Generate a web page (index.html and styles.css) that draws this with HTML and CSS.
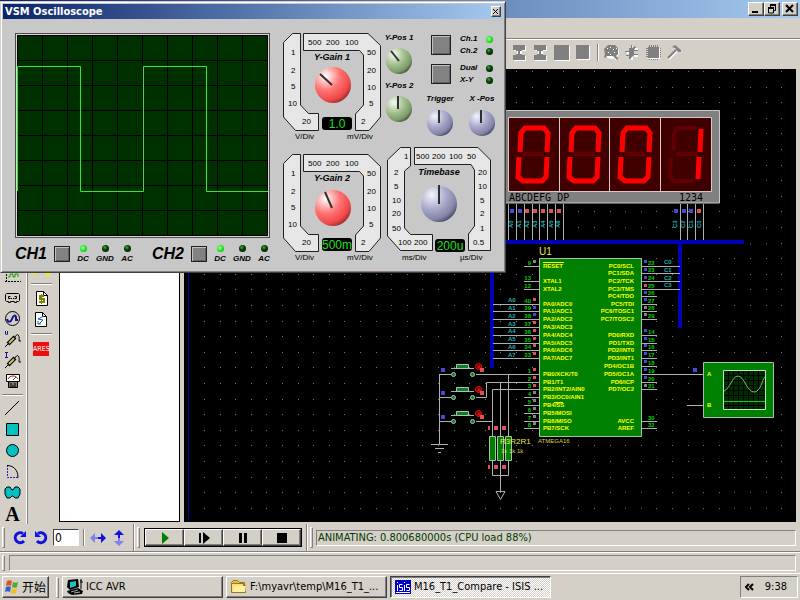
FILE: index.html
```html
<!DOCTYPE html>
<html lang="zh-CN">
<head>
<meta charset="utf-8">
<title>M16_T1_Compare - ISIS</title>
<link rel="stylesheet" href="styles.css">
</head>
<body>
<header class="titlebar">
  <button class="win-btn" aria-label="Minimize"><svg width="12" height="10"><path d="M2 8h6" stroke="#000" stroke-width="2"/></svg></button>
  <button class="win-btn" aria-label="Restore"><svg width="12" height="10" fill="none" stroke="#000"><path d="M4 1h6M4.500 1v3M9.500 1v5.500H8M2 4.500h6M2.500 4v5h5V4"/><path d="M4 1h6M2 4h6" stroke-width="2"/></svg></button>
  <button class="win-btn win-close" aria-label="Close"><svg width="12" height="10"><path d="M2 1l7 7M9 1L2 8" stroke="#000" stroke-width="2"/></svg></button>
</header>
<div class="menubar"></div>
<div class="toolbar">
  <button class="tool" aria-label="Block copy"><svg width="17" height="17"><path class="emb" d="M3 2h12v5h-4v5h4v5H3v-5h3V7H3z"/><path fill="#808080" d="M2 1h12v5h-3v1H9v3h2v1h3v5H2v-5h3v-1h2V7H5V6H2z"/></svg></button>
  <button class="tool" aria-label="Block move"><svg width="17" height="17"><path class="emb" d="M3 2h12v5h-4v5h4v5H3v-5h3V7H3z"/><path fill="#808080" d="M2 1h12v5h-3v1H9v3h2v1h3v5H2v-5h3v-1h2V7H5V6H2z"/></svg></button>
  <button class="tool" aria-label="Block rotate"><svg width="17" height="17"><path class="emb" d="M2 2h15v15H2z"/><path fill="#808080" d="M1 1h15v15H1z"/></svg></button>
  <button class="tool" aria-label="Block delete"><svg width="17" height="17"><path class="emb" d="M3 2h13v14H3z"/><path fill="#808080" d="M2 1h13v14H2z"/></svg></button>
  <span class="vsep"></span>
  <button class="tool" aria-label="Pick"><svg width="17" height="17"><g class="emb" transform="translate(1 1)"><circle cx="8" cy="7" r="7"/><path d="M11 10l5 5h-5z"/></g><path d="M5 1h7l3 3v6l-2 2 3 3-2 1-4-4H4l-2 2-1-1 1-3-1-5z" fill="#808080"/><path d="M4 4.500h1M7 3.500h1M10 5.500h1M5 8.500h1M11 8.500h1M7 10.500h1M13 4.500h1" stroke="#fff"/></svg></button>
  <button class="tool" aria-label="Make device"><svg width="17" height="17"><g stroke="#fff" stroke-width="2" transform="translate(1 1)"><path d="M7 1v14M2 8h4M9 4h4M9 11h4"/></g><path d="M7 1h1v3l3-2 1 1-2 3h4v1h-4v3h4v1h-4l-4 4H5v-3H2v-1h3V8H1V7h4V4h2z" fill="#808080"/></svg></button>
  <button class="tool" aria-label="Package"><svg width="17" height="17"><path d="M4.500 1v15M6.500 1v15M8.500 1v15M10.500 1v15M12.500 1v15M1 4.500h15M1 6.500h15M1 8.500h15M1 10.500h15M1 12.500h15" stroke="#808080"/><path class="emb" d="M4 4h11v11H4z"/><path d="M3 3h11v11H3z" fill="#808080"/></svg></button>
  <button class="tool" aria-label="Decompose"><svg width="17" height="17"><path d="M3 15L11 7M8 3l7 5" stroke="#fff" stroke-width="2"/><path d="M2 14L10 6" stroke="#808080" stroke-width="2"/><path d="M6 3l3-2 6 5v2h-2l-2-1-2-3z" fill="#808080"/></svg></button>
</div>

<main class="workspace">
  <nav class="modes">
    <button class="tool" aria-label="Graph"><svg width="17" height="17"><path d="M2.500 0v14M1 13.500h16" stroke="#000" stroke-dasharray="2 1"/><path d="M4 0h11v11H4z" fill="#c3e6b4"/><path d="M4 9h2V6h3v3h2V6h3v3M5 2l3-1 2 2 3-1" fill="none" stroke="#3c7a30"/></svg></button>
    <button class="tool" aria-label="Tape"><svg width="17" height="17" fill="none" stroke="#000"><path d="M2.500 4.500h12l1 1v6l-1 1h-2v1h-2v-1M2.500 4.500l-1 1v6l1 1h2v1h2v-1h4"/><path d="M6.500 7.500h-2v2h2M10.500 7.500h2v2h-2M7.500 9v1M9.500 9v1"/></svg></button>
    <button class="tool" aria-label="Generator"><svg width="17" height="17" fill="none"><circle cx="8.500" cy="8.500" r="7" stroke="#000"/><path d="M3 9c1 4 4 3 5 0s3-5 4-2v3h2" stroke="#14148c" stroke-width="2"/></svg></button>
    <button class="tool" aria-label="Voltage probe"><svg width="17" height="17" fill="none"><path d="M1.500 0v3l1 1 1-1V0" stroke="#14148c"/><path d="M4 13l7-7" stroke="#000" stroke-width="4"/><path d="M5 12l5-5" stroke="#c8c860" stroke-width="2"/><path d="M1 16l3-3M11 6c2-4 5-3 4 4h2" stroke="#000"/></svg></button>
    <button class="tool" aria-label="Current probe"><svg width="17" height="17" fill="none"><path d="M1 .5h3M2.500 0v5M1 5.500h3" stroke="#14148c"/><path d="M4 13l7-7" stroke="#000" stroke-width="4"/><path d="M5 12l5-5" stroke="#c8c860" stroke-width="2"/><path d="M1 16l3-3M11 6c2-4 5-3 4 4h2" stroke="#000"/></svg></button>
    <button class="tool" aria-label="Instruments"><svg width="17" height="17"><path d="M2.500 1.500h13v7h-13z" fill="#fff" stroke="#000"/><path d="M4 6c2-4 8-4 10 0M9 7l3-3" fill="none" stroke="#a02020"/><path d="M4.500 8.500h9v6h-9z" fill="#777" stroke="#000"/><path d="M6 11h2M10 11h2M6 13h6" stroke="#000"/></svg></button>
    <span class="hsep"></span>
    <button class="tool" aria-label="Line"><svg width="17" height="17"><path d="M1 15L15 1" stroke="#000" stroke-width="1"/></svg></button>
    <button class="tool" aria-label="Box"><svg width="17" height="17"><path d="M2.500 2.500h12v12h-12z" fill="#00c0c0" stroke="#000"/></svg></button>
    <button class="tool" aria-label="Circle"><svg width="17" height="17"><circle cx="8.500" cy="8.500" r="6" fill="#00c0c0" stroke="#000"/></svg></button>
    <button class="tool" aria-label="Arc"><svg width="17" height="17" fill="none"><path d="M3.500 2v12.500H15" stroke="#2020d0" stroke-dasharray="2 1"/><path d="M3 2.500c6 0 11 4 11 12" stroke="#000"/></svg></button>
    <button class="tool" aria-label="Closed path"><svg width="17" height="17"><path d="M3 3h3l2 3h1l2-3h3l2 2v5l-2 4h-3l-2-2H8l-2 2H3l-2-4V5z" fill="#00c0c0" stroke="#000"/></svg></button>
    <button class="tool glyph">A</button>
  </nav>
  <nav class="tasks">
    <button class="tool" aria-label="Netlist"><svg width="21" height="21"><path d="M3 11h6v3H5v2H2zM14 14h5v3h-4z" fill="#f4ee20"/></svg></button>
    <span class="hsep"></span>
    <button class="tool" aria-label="Bill of materials"><svg width="17" height="17"><path d="M3.500 1.500h7l4 4v10h-11z" fill="#fff" stroke="#000"/><path d="M10.500 1.500v4h4" fill="none" stroke="#000"/><path d="M11 6H7v3h4v3H6" fill="none" stroke="#808000" stroke-width="2"/><path d="M8.500 4v10" stroke="#808000"/></svg></button>
    <button class="tool" aria-label="Electrical check"><svg width="17" height="17"><path d="M2.500 1.500h7l4 4v10h-11z" fill="#fff" stroke="#000"/><path d="M9.500 1.500v4h4" fill="none" stroke="#000"/><path d="M11 5L5 8l5 1-4 4M5 10v3h3" fill="none" stroke="#1060b0"/></svg></button>
    <span class="hsep"></span>
    <button class="tool ares">ARES</button>
  </nav>
  <section class="picker"></section>
  <section class="canvas">
    <svg class="schematic" width="100%" height="100%">
      <defs>
        <pattern id="dots" width="78" height="78" patternUnits="userSpaceOnUse" x="516" y="71">
          <path stroke="#707870" stroke-dasharray="1 15 1 14 1 15 1 14 1 15" d="M0 .5H78M0 16.500H78M0 31.500H78M0 47.500H78M0 62.500H78"/>
        </pattern>
        <g id="switch">
          <path class="wire" d="M439 374.500h12M476 374.500h6M451 368.500h23"/>
          <path d="M456.500 364.500h12v4h-12z" fill="#107a30" stroke="#a8c8a8"/>
          <circle cx="453.500" cy="374.500" r="2" class="node"/><circle cx="472.500" cy="374.500" r="2" class="node"/>
          <circle cx="478.500" cy="366.500" r="3" fill="#600" stroke="#f01010"/><path d="M477 367h4M479 365v4" stroke="#f01010"/>
          <path class="lo" d="M441 368h4v4h-4z"/><path class="hi" d="M480 368h4v4h-4z"/>
        </g>
      </defs>
      <g transform="translate(-184 -69)">
        <path fill="url(#dots)" d="M184 69h1600v1200H184z"/>
        <path d="M188.500 69v1200" stroke="#000090"/>

        <!-- seven-segment display -->
        <path d="M490 110.500h229.500v92.500H490z" fill="#808080" stroke="#c8c8c8"/>
        <path d="M508.500 117.500H711.500V191.500H508.500z" fill="#400000" stroke="#d8c8c8"/>
        <path d="M559.500 117v74M609.500 117v74M660.500 117v74" stroke="#d8c8c8"/>
        <g class="seg-off"><path d="M523 154H544M574 154h21M625 154h21M676 154h21M673 151l1-18 4-5h18M671 158l-1 18 4 5h20"/></g>
        <g class="seg-on" id="zero"><path d="M520 152l1-19 4-5h19l4 5-1 19M519 157l-1 20 5 4h19l4-4 1-20"/></g>
        <use href="#zero" x="51"/><use href="#zero" x="102"/>
        <path class="seg-on" d="M701 129l-1 23M699 157l-1 22"/>
        <g class="port"><text x="509" y="201">ABCDEFG DP</text><text x="679" y="201">1234</text></g>
        <path class="wire" d="M508.500 204v37M516.500 204v37M524.500 204v37M532.500 204v37M539.500 204v37M547.500 204v37M555.500 204v37M563.500 204v37M680.500 204v37M687.500 204v37M695.500 204v37M703.500 204v37"/>
        <path class="lo" d="M510 209h4v4h-4zM518 209h4v4h-4zM674 209h4v4h-4zM682 209h4v4h-4zM689 209h4v4h-4z"/>
        <path class="hi" d="M525 209h4v4h-4zM533 209h4v4h-4zM541 209h4v4h-4zM549 209h4v4h-4zM557 209h4v4h-4zM697 209h4v4h-4z"/>
        <g class="net">
          <text transform="translate(513 228) rotate(-90)">A0</text><text transform="translate(521 228) rotate(-90)">A1</text><text transform="translate(529 228) rotate(-90)">A2</text><text transform="translate(537 228) rotate(-90)">A3</text><text transform="translate(545 228) rotate(-90)">A4</text><text transform="translate(553 228) rotate(-90)">A5</text><text transform="translate(560 228) rotate(-90)">A6</text>
          <text transform="translate(677 228) rotate(-90)">C3</text><text transform="translate(685 228) rotate(-90)">C2</text><text transform="translate(693 228) rotate(-90)">C1</text><text transform="translate(701 228) rotate(-90)">C0</text>
        </g>

        <!-- buses -->
        <path d="M490 242H744M680 242V328M492 242V368" stroke="#0000b4" stroke-width="4" fill="none"/>

        <!-- wires -->
        <path class="wire" d="M524 266.500h15M524 281.500h15M524 289.500h15M493 304.500h46M493 311.500h46M493 319.500h46M493 327.500h46M493 335.500h46M493 343.500h46M493 350.500h46M493 358.500h46M482 374.500h57M482 397.500h4.500V382.500H539M482 421.500h10M492.500 436V389.500H539M500.500 382v54M508.500 374v62M524 397.500h15M524 405.500h15M524 413.500h15M524 421.500h15M524 428.500h15"/>
        <path class="wire" d="M642 266.500h38M642 273.500h38M642 281.500h38M642 289.500h38M642 296.500h15M642 304.500h15M642 311.500h15M642 319.500h15M642 335.500h15M642 343.500h15M642 350.500h15M642 358.500h15M642 366.500h15M642 374.500h61M642 382.500h15M642 389.500h15M642 421.500h15M642 428.500h15M687 405.500h16"/>

        <!-- microcontroller -->
        <text x="539" y="255" class="ref">U1</text>
        <path d="M539.500 258.500h102v178h-102z" fill="#008000" stroke="#a8c0a8"/>
        <path d="M543 262.500h21M554 402.500h9" stroke="#ff0"/>
        <g class="pin">
          <text x="543" y="268">RESET</text><text x="543" y="283">XTAL1</text><text x="543" y="291">XTAL2</text>
          <text x="543" y="306">PA0/ADC0</text><text x="543" y="313">PA1/ADC1</text><text x="543" y="321">PA2/ADC2</text><text x="543" y="329">PA3/ADC3</text><text x="543" y="337">PA4/ADC4</text><text x="543" y="345">PA5/ADC5</text><text x="543" y="352">PA6/ADC6</text><text x="543" y="360">PA7/ADC7</text>
          <text x="543" y="376">PB0/XCK/T0</text><text x="543" y="384">PB1/T1</text><text x="543" y="391">PB2/INT2/AIN0</text><text x="543" y="399">PB3/OC0/AIN1</text><text x="543" y="407">PB4/SS</text><text x="543" y="415">PB5/MOSI</text><text x="543" y="423">PB6/MISO</text><text x="543" y="430">PB7/SCK</text>
          <text x="538" y="443" class="part">ATMEGA16</text>
        </g>
        <g class="pin end">
          <text x="634" y="268">PC0/SCL</text><text x="634" y="275">PC1/SDA</text><text x="634" y="283">PC2/TCK</text><text x="634" y="291">PC3/TMS</text><text x="634" y="298">PC4/TDO</text><text x="634" y="306">PC5/TDI</text><text x="634" y="313">PC6/TOSC1</text><text x="634" y="321">PC7/TOSC2</text>
          <text x="634" y="337">PD0/RXD</text><text x="634" y="345">PD1/TXD</text><text x="634" y="352">PD2/INT0</text><text x="634" y="360">PD3/INT1</text><text x="634" y="368">PD4/OC1B</text><text x="634" y="376">PD5/OC1A</text><text x="634" y="384">PD6/ICP</text><text x="634" y="391">PD7/OC2</text><text x="634" y="423">AVCC</text><text x="634" y="430">AREF</text>
        </g>
        <g class="num end">
          <text x="531" y="265">9</text><text x="531" y="280">13</text><text x="531" y="288">12</text><text x="531" y="303">40</text><text x="531" y="310">39</text><text x="531" y="318">38</text><text x="531" y="326">37</text><text x="531" y="334">36</text><text x="531" y="342">35</text><text x="531" y="349">34</text><text x="531" y="357">33</text>
          <text x="531" y="373">1</text><text x="531" y="381">2</text><text x="531" y="388">3</text><text x="531" y="396">4</text><text x="531" y="404">5</text><text x="531" y="412">6</text><text x="531" y="420">7</text><text x="531" y="427">8</text>
        </g>
        <g class="num">
          <text x="648" y="265">22</text><text x="648" y="272">23</text><text x="648" y="280">24</text><text x="648" y="288">25</text><text x="648" y="295">26</text><text x="648" y="303">27</text><text x="648" y="310">28</text><text x="648" y="318">29</text>
          <text x="648" y="334">14</text><text x="648" y="342">15</text><text x="648" y="349">16</text><text x="648" y="357">17</text><text x="648" y="365">18</text><text x="648" y="373">19</text><text x="648" y="381">20</text><text x="648" y="388">21</text><text x="648" y="420">30</text><text x="648" y="427">32</text>
        </g>
        <path class="hi" d="M533 298h3v3h-3zM533 321h3v3h-3zM533 329h3v3h-3zM533 337h3v3h-3zM533 344h3v3h-3zM533 352h3v3h-3zM533 368h3v3h-3zM533 376h3v3h-3zM533 384h3v3h-3zM644 284h3v3h-3z"/>
        <path class="lo" d="M533 306h3v3h-3zM533 313h3v3h-3zM644 260h3v3h-3zM644 268h3v3h-3zM644 276h3v3h-3zM644 291h3v3h-3zM644 298h3v3h-3zM644 329h3v3h-3zM644 337h3v3h-3zM644 344h3v3h-3zM644 352h3v3h-3zM644 360h3v3h-3zM644 368h3v3h-3zM644 376h3v3h-3zM693 368h4v4h-4z"/>
        <path fill="#848484" d="M533 260h3v3h-3zM533 391h3v3h-3zM533 399h3v3h-3zM533 407h3v3h-3zM533 415h3v3h-3zM533 422h3v3h-3zM644 306h3v3h-3zM644 313h3v3h-3zM644 384h3v3h-3z"/>
        <g class="net">
          <text x="508" y="302">A0</text><text x="508" y="310">A1</text><text x="508" y="318">A2</text><text x="508" y="326">A3</text><text x="508" y="333">A4</text><text x="508" y="341">A5</text><text x="508" y="349">A6</text><text x="508" y="357">A7</text>
          <text x="664" y="264">C0</text><text x="664" y="272">C1</text><text x="664" y="280">C2</text><text x="664" y="287">C3</text>
        </g>

        <!-- push buttons and pull-downs -->
        <use href="#switch"/><use href="#switch" y="23"/><use href="#switch" y="47"/>
        <path class="wire" d="M439.500 374v70M431 444.500h17M435 448.500h9M438 452.500h3"/>
        <path d="M489.500 436.500h6v24h-6zM497.500 436.500h6v24h-6zM505.500 436.500h6v24h-6z" fill="#008000" stroke="#a8c0a8"/>
        <path class="wire" d="M492.500 461v14.500h16V461M500.500 461v30M496 491.500h9l-4.500 8z"/>
        <path fill="#e05068" d="M488 426h2v4h-2zM494 426h4v4h-4zM502 426h4v4h-4zM488 465h2v4h-2zM494 465h4v4h-4zM502 465h4v4h-4z"/>
        <text class="resistors" x="500" y="444">R3R2R1</text>
        <g class="pin"><text x="501" y="453" class="part">1k 1k 1k</text></g>

        <!-- oscilloscope part -->
        <path d="M703.500 362.500h70v55h-70z" fill="#008000" stroke="#a8c0a8"/>
        <path d="M723.500 370.500h42v39h-42z" fill="#002c00" stroke="#c8e0c8"/>
        <path d="M728.500 371v38M733.500 371v38M738.500 371v38M743.500 371v38M748.500 371v38M753.500 371v38M758.500 371v38M724 375.500h41M724 380.500h41M724 385.500h41M724 390.500h41M724 395.500h41M724 405.500h41" stroke="#000"/>
        <path d="M724 391c6-2 8-15 14-15s9 16 16 16 8-13 11-15" stroke="#80b080" fill="none"/><path d="M724 401.500h41" stroke="#20c020"/>
        <g class="pin"><text x="707" y="376">A</text><text x="707" y="407">B</text></g>
      </g>
    </svg>
  </section>
</main>

<div class="controls">
  <span class="grip"></span>
  <button class="tool rot" aria-label="Rotate clockwise"><svg width="16" height="16" fill="none"><path d="M11 3.500A5 5 0 1 0 12 11" stroke="#1010e0" stroke-width="3"/><path d="M14 1v6H8z" fill="#1010e0"/></svg></button>
  <button class="tool rot" aria-label="Rotate anticlockwise"><svg width="16" height="16" fill="none"><path d="M5 3.500A5 5 0 1 1 4 11" stroke="#1010e0" stroke-width="3"/><path d="M2 1v6h6z" fill="#1010e0"/></svg></button>
  <input class="angle" type="text" value="0" aria-label="Angle">
  <span class="vsep"></span>
  <button class="tool" aria-label="Mirror horizontally"><svg width="16" height="16"><path d="M0 8l5-5v4h3v2H5v4z" fill="#8080f0"/><path d="M16 8l-5-5v4H8v2h3v4z" fill="#1010e0"/></svg></button>
  <button class="tool" aria-label="Mirror vertically"><svg width="16" height="16"><path d="M8 0L3 5h4v3h2V5h4z" fill="#1010e0"/><path d="M8 16l-5-5h4V8h2v3h4z" fill="#8080f0"/></svg></button>
  <span class="edge"></span>
  <span class="grip"></span>
  <div class="play">
    <button aria-label="Play"><svg width="16" height="12"><path d="M5 0l7 6-7 6z" fill="#008000"/></svg></button>
    <button aria-label="Step"><svg width="16" height="12"><path d="M3 1h2v10H3zM7 0l7 6-7 6z"/></svg></button>
    <button aria-label="Pause"><svg width="16" height="12"><path d="M4 1h3v10H4zM9 1h3v10H9z"/></svg></button>
    <button aria-label="Stop"><svg width="16" height="12"><path d="M3 1h10v10H3z"/></svg></button>
  </div>
  <span class="edge"></span>
  <span class="grip"></span>
  <output class="field anim">ANIMATING: 0.800680000s (CPU load 88%)</output>
</div>
<div class="status"><span class="grip"></span><div class="field"></div></div>

<footer class="taskbar">
  <button class="task start"><svg width="16" height="16"><path d="M3 2c2-1 3-1 5 0L7 7c-2-1-3-1-5 0z" fill="#e05020"/><path d="M9 3c2 1 3 1 5 0l-1 5c-2 1-3 1-5 0z" fill="#50a830"/><path d="M2 8c2-1 3-1 5 0l-1 5c-2-1-3-1-5 0z" fill="#3060d0"/><path d="M8 9c2 1 3 1 5 0l-1 5c-2 1-3 1-5 0z" fill="#f0c020"/></svg>开始</button>
  <span class="grip"></span>
  <button class="task"><svg width="18" height="16"><path d="M2 1l10-1 1 8-9 3-3-3z"/><path d="M4 3l6-1v5l-6 2z" fill="#20c0c0"/><path d="M15 1v9" stroke="#000"/><path d="M14 3h3M15 0v2" stroke="#000"/><path d="M1 12l11-3 5 3-1 3-10 1-4-2z"/><path d="M5 13l7-2M8 14l6-1" stroke="#aaa"/></svg>ICC AVR</button>
  <button class="task"><svg width="18" height="16"><path d="M1.500 3.500l2-2h4l2 2h5v3h-13z" fill="#e8c040" stroke="#9a7818"/><path d="M1.500 13.500v-9h12v2h2v7z" fill="#f8e078" stroke="#9a7818"/><path d="M3 13l1-6h12l-1 6z" fill="#fff0a0"/></svg>F:\myavr\temp\M16_T1_...</button>
  <button class="task active"><svg width="18" height="16"><path d="M1 1h16v14H1z" fill="#0000c8"/><path d="M3.500 3v1M3.500 6v6M8.500 5.500h-3v3h3v3h-3M10.500 3v1M10.500 6v6M15.500 5.500h-3v3h3v3h-3M2 13.500h14" fill="none" stroke="#fff"/></svg>M16_T1_Compare - ISIS ...</button>
  <div class="tray"><svg width="10" height="8" fill="none" stroke="#000" stroke-width="2"><path d="M4 1L1 4l3 3M8 1L5 4l3 3"/></svg><time>9:38</time></div>
</footer>

<section class="scope">
  <header class="scope-title"><span>VSM Oscilloscope</span><button class="win-btn small" aria-label="Close"><svg width="8" height="8"><path d="M1 1l5 5M6 1L1 6" stroke="#000"/></svg></button></header>
  <div class="scope-body">
    <div class="scope-left">
      <div class="screen">
        <svg width="251" height="201" viewBox="0 0 251 201">
          <path fill="#003000" d="M0 0h251v201H0z"/>
          <path fill="none" stroke="#000" d="M.5.5h250v200H.5zM25.500 0v201M50.500 0v201M75.500 0v201M100.500 0v201M125.500 0v201M150.500 0v201M175.500 0v201M200.500 0v201M225.500 0v201M0 25.500h251M0 50.500h251M0 75.500h251M0 100.500h251M0 125.500h251M0 150.500h251M0 175.500h251"/>
          <path fill="none" stroke="#32e632" d="M.5 156V31.500h63v125h63V31.500h63v125H251"/>
        </svg>
      </div>
      <div class="channels">
        <div class="channel"><b>CH1</b><button class="pad mini" aria-label="CH1 coupling"></button><span class="lamp"><i class="led on"></i>DC</span><span class="lamp"><i class="led"></i>GND</span><span class="lamp"><i class="led"></i>AC</span></div>
        <div class="channel"><b>CH2</b><button class="pad mini" aria-label="CH2 coupling"></button><span class="lamp"><i class="led on"></i>DC</span><span class="lamp"><i class="led"></i>GND</span><span class="lamp"><i class="led"></i>AC</span></div>
      </div>
    </div>
    <div class="scope-right">
      <div class="row-top">
        <svg class="dial" width="98" height="110">
          <defs>
            <radialGradient id="red" cx=".3" cy=".25" r=".8"><stop offset="0" stop-color="#fff"/><stop offset=".5" stop-color="#ff7474"/><stop offset=".85" stop-color="#f04848"/><stop offset="1" stop-color="#a83030"/></radialGradient>
            <radialGradient id="green" cx=".3" cy=".25" r=".8"><stop offset="0" stop-color="#f4faf0"/><stop offset=".5" stop-color="#a4c090"/><stop offset=".85" stop-color="#7c9c68"/><stop offset="1" stop-color="#4c6040"/></radialGradient>
            <radialGradient id="blue" cx=".3" cy=".25" r=".8"><stop offset="0" stop-color="#f4f4ff"/><stop offset=".5" stop-color="#aaaacb"/><stop offset=".85" stop-color="#8484a8"/><stop offset="1" stop-color="#505070"/></radialGradient>
            <g id="gain">
              <path class="band" d="M9.500.5H17.500V72L25.500 80.500H35.500V97.500H12.500L.5 84V9.500zM20.500.5H85L97.500 12.500V84L86 97.500H72.500V81L80.500 72V22L76.500 17.500H20.500z"/>
              <text x="25" y="12">500</text><text x="43" y="12">200</text><text x="62" y="12">100</text>
              <text x="8" y="22">1</text><text x="8" y="40">2</text><text x="8" y="56">5</text><text x="5" y="73">10</text><text x="19" y="91">20</text>
              <text x="84" y="22">50</text><text x="84" y="40">20</text><text x="84" y="57">10</text><text x="86" y="73">5</text><text x="78" y="91">2</text>
              <text x="12" y="106">V/Div</text><text x="64" y="106">mV/Div</text>
              <rect x="39" y="84" width="30" height="13" rx="3"/>
            </g>
          </defs>
          <use href="#gain"/><text class="name" x="49" y="27">Y-Gain 1</text>
          <circle cx="50" cy="52" r="18" fill="url(#red)"/><path class="hand" d="M49 52L37 41"/><text class="value" x="54" y="95">1.0</text>
        </svg>
        <div class="ypos">
          <span class="cap">Y-Pos 1</span><svg width="28" height="28"><circle cx="14" cy="14" r="13" fill="url(#green)"/><path class="hand" d="M14 14L6 4"/></svg>
          <span class="cap">Y-Pos 2</span><svg width="28" height="28"><circle cx="14" cy="14" r="13" fill="url(#green)"/><path class="hand" d="M13 14V1"/></svg>
        </div>
        <div class="selectors">
          <div class="sel"><button class="pad" aria-label="Trigger channel"></button><div class="opts"><span>Ch.1<i class="led on"></i></span><span>Ch.2<i class="led"></i></span></div></div>
          <div class="sel"><button class="pad" aria-label="Display mode"></button><div class="opts"><span>Dual<i class="led"></i></span><span>X-Y<i class="led"></i></span></div></div>
          <div class="knobs">
            <div class="knob"><span class="cap">Trigger</span><svg width="28" height="28"><circle cx="14" cy="14" r="13" fill="url(#blue)"/><path class="hand" d="M13 14V1"/></svg></div>
            <div class="knob"><span class="cap">X -Pos</span><svg width="28" height="28"><circle cx="14" cy="14" r="13" fill="url(#blue)"/><path class="hand" d="M13 14V1"/></svg></div>
          </div>
        </div>
      </div>
      <div class="row-bottom">
        <svg class="dial" width="98" height="110"><use href="#gain"/><text class="name" x="49" y="27">Y-Gain 2</text>
          <circle cx="50" cy="54" r="18" fill="url(#red)"/><path class="hand" d="M49 54L42 38"/><text class="value" x="54" y="95">500m</text></svg>
        <svg class="dial" width="105" height="117">
          <path class="band" d="M13.500.5H23.500V19L17.500 24V81L23.500 87.500H45.500V103.500H13.500L.5 89V13zM27.500.5H91L103.500 13V103.500H81.500V87L87.500 79V23L84 17.500H27.500z"/>
          <text x="17" y="12">1</text><text x="29" y="12">500</text><text x="45" y="12">200</text><text x="62" y="12">100</text><text x="80" y="12">50</text>
          <text x="7" y="28">2</text><text x="7" y="42">5</text><text x="5" y="56">10</text><text x="5" y="69">20</text><text x="5" y="84">50</text><text x="11" y="98">100</text><text x="27" y="98">200</text>
          <text x="91" y="28">20</text><text x="91" y="42">10</text><text x="93" y="56">5</text><text x="93" y="69">2</text><text x="93" y="84">1</text><text x="86" y="98">0.5</text>
          <text x="15" y="113">ms/Div</text><text x="73" y="113">µs/Div</text>
          <text class="name" x="52" y="28">Timebase</text>
          <circle cx="52" cy="57" r="18" fill="url(#blue)"/><path class="hand" d="M52 57V38"/>
          <rect x="48" y="92" width="30" height="13" rx="3"/><text class="value" x="63" y="103">200u</text>
        </svg>
      </div>
    </div>
  </div>
</section>
</body>
</html>
```
FILE: styles.css
```css
* { box-sizing: border-box; }

body {
  margin: 0;
  min-height: 100vh;
  display: flex;
  flex-direction: column;
  background: #d4d0c8;
  color: #000;
  font: 11px/14px "DejaVu Sans Condensed", "Noto Sans CJK SC", sans-serif;
  overflow: hidden;
}

svg { display: block; flex: none; }
button { font: inherit; color: inherit; padding: 0; margin: 0; }

/* main window chrome */
.titlebar {
  height: 18px;
  padding: 2px 2px 2px 0;
  display: flex;
  justify-content: flex-end;
  background: linear-gradient(90deg, #0a246a, #a6caf0);
}
.win-btn {
  width: 16px;
  height: 14px;
  display: grid;
  place-items: center;
  background: #d4d0c8;
  border: 1px solid;
  border-color: #fff #404040 #404040 #fff;
  box-shadow: inset -1px -1px #808080;
}
.win-close { margin-left: 2px; }
.menubar { height: 21px; border-bottom: 1px solid #808080; }
.toolbar {
  height: 30px;
  padding: 0 0 4px 509px;
  display: flex;
  align-items: center;
  border-top: 1px solid #fff;
}
.tool {
  width: 21px;
  height: 21px;
  display: grid;
  place-items: center;
  flex: none;
  background: none;
  border: 0;
}
.emb { fill: #fff; }
.vsep {
  width: 2px;
  height: 17px;
  margin: 0 2px 0 4px;
  flex: none;
  background: linear-gradient(90deg, #808080 50%, #fff 50%);
}
.hsep {
  width: 21px;
  height: 2px;
  margin: 0 0 2px;
  flex: none;
  background: linear-gradient(#808080 50%, #fff 50%);
}

/* work area */
.workspace { flex: 1; min-height: 0; display: flex; padding-right: 4px; }
.modes {
  width: 28px;
  padding-left: 2px;
  display: flex;
  flex-direction: column;
  justify-content: flex-end;
  border-right: 1px solid #808080;
  box-shadow: inset -1px 0 #fff;
}
.modes .hsep { margin-top: 2px; }
.glyph { font: bold 20px/20px "Liberation Serif", serif; }
.tasks {
  width: 31px;
  padding: 190px 0 0 3px;
  display: flex;
  flex-direction: column;
}
.tasks .hsep { margin: 3px 0; }
.ares {
  width: 16px;
  height: 14px;
  margin: 4px 2px;
  background: #e81010;
  color: #fff;
  font: 7px/8px "DejaVu Sans Condensed", sans-serif;
  overflow: hidden;
}
.picker { width: 121px; margin-bottom: 2px; background: #fff; border: 1px solid #000; }
.canvas { flex: 1; min-width: 0; margin: 0 0 2px 4px; background: #000; overflow: hidden; }

/* schematic */
.schematic text { font-family: "Liberation Sans", sans-serif; }
.wire { fill: none; stroke: #b0b0b0; }
.hi { fill: #e05050; }
.lo { fill: #4848d8; }
.node { fill: #107a30; stroke: #a8c8a8; }
.pin { font-size: 6px; font-weight: bold; fill: #ff0; }
.num { font-size: 6px; font-weight: bold; fill: #00d000; }
.net { font-size: 6px; font-weight: bold; fill: #20b0b0; }
.end { text-anchor: end; }
.part { font-weight: normal; fill: #d8d840; }
.ref { font-size: 10px; fill: #e8e850; }
.resistors { font-size: 8px; fill: #e8e850; }
.schematic .port { font-size: 10px; }
.schematic .port text { font-family: "DejaVu Sans Mono", monospace; }
.seg-on { fill: none; stroke: #f00; stroke-width: 5; }
.seg-off { fill: none; stroke: #600000; stroke-width: 4; }

/* animation controls */
.controls {
  height: 28px;
  padding: 0 4px 0 2px;
  display: flex;
  align-items: center;
  border-bottom: 1px solid #808080;
}
.grip {
  width: 3px;
  height: 21px;
  flex: none;
  border: 1px solid;
  border-color: #fff #808080 #808080 #fff;
}
.controls .rot:first-of-type { margin-left: 4px; }
.angle {
  width: 26px;
  height: 17px;
  margin-left: 2px;
  padding: 0 1px;
  flex: none;
  border: 1px solid;
  border-color: #404040 #fff #fff #404040;
  background: #fff;
  font: 12px/15px "DejaVu Sans Condensed", sans-serif;
}
.edge {
  width: 2px;
  align-self: stretch;
  margin: 0 2px 0 4px;
  flex: none;
  background: linear-gradient(90deg, #808080 50%, #fff 50%);
}
.play { display: flex; flex: none; margin-left: 4px; border: 1px solid #000; }
.play button {
  width: 39px;
  height: 17px;
  display: grid;
  place-items: center;
  background: #d4d0c8;
  border: 1px solid;
  border-color: #fff #404040 #404040 #fff;
  box-shadow: inset -1px -1px #808080;
}
.field { flex: 1; height: 16px; border: 1px solid; border-color: #808080 #fff #fff #808080; }
.anim { margin-left: 3px; padding-left: 1px; color: #003800; }
.status {
  height: 21px;
  padding: 0 4px 0 2px;
  display: flex;
  align-items: center;
  gap: 4px;
  border-top: 1px solid #fff;
}
.status .grip { height: 16px; }

/* taskbar */
.taskbar {
  height: 27px;
  padding: 2px;
  display: flex;
  align-items: center;
  gap: 3px;
  border-top: 1px solid #fff;
}
.task {
  width: 161px;
  height: 22px;
  padding: 0 3px;
  display: flex;
  align-items: center;
  gap: 2px;
  white-space: nowrap;
  background: #d4d0c8;
  border: 1px solid;
  border-color: #fff #404040 #404040 #fff;
  box-shadow: inset -1px -1px #808080;
}
.start { width: 47px; padding: 0 1px; font: 12px/14px "Noto Sans CJK SC", sans-serif; }
.start + .grip { margin-left: 4px; }
.active {
  background: repeating-conic-gradient(#d4d0c8 0 25%, #fff 0 50%) 0 0 / 2px 2px;
  border-color: #404040 #fff #fff #404040;
  box-shadow: inset 1px 1px #808080;
}
.tray {
  width: 58px;
  height: 22px;
  margin-left: auto;
  padding: 0 10px 0 4px;
  display: flex;
  align-items: center;
  justify-content: space-between;
  border: 1px solid;
  border-color: #808080 #fff #fff #808080;
}

/* floating oscilloscope window */
.scope {
  position: absolute;
  left: 0;
  top: 1px;
  width: 506px;
  padding: 2px;
  background: #c8c8c8;
  border: 1px solid;
  border-color: #d4d0c8 #404040 #404040 #d4d0c8;
  box-shadow: inset 1px 1px #fff, inset -1px -1px #808080;
}
.scope-title {
  height: 15px;
  padding: 0 2px;
  display: flex;
  align-items: center;
  justify-content: space-between;
  background: linear-gradient(90deg, #0a246a, #a6caf0);
  color: #fff;
  font-weight: bold;
}
.small { width: 10px; height: 11px; }
.scope-body { display: flex; gap: 13px; padding: 14px 0 6px 12px; font: italic bold 8px/10px "Liberation Sans", sans-serif; }
.scope-left { width: 255px; flex: none; }
.screen { padding: 1px; border: 1px solid #504848; background: #d8d8d8; }
.channels { display: flex; gap: 14px; padding-top: 6px; }
.channel { display: flex; align-items: center; flex: none; }
.channel b { width: 39px; font-size: 16px; line-height: 20px; }
.lamp { width: 22px; display: flex; flex-direction: column; align-items: center; gap: 2px; }
.mini + .lamp { margin-left: 2px; }
.led {
  width: 7px;
  height: 7px;
  border-radius: 50%;
  background: radial-gradient(circle at 40% 35%, #50a050, #004000 40%, #002000);
}
.led.on { background: radial-gradient(circle at 40% 40%, #a0ffa0, #20e820 50%, #109010); }
.pad {
  width: 20px;
  height: 20px;
  flex: none;
  background: #828282;
  border: 1px solid #202020;
  box-shadow: inset 1px 1px #c0c0c0, inset -1px -1px #606060;
}
.pad.mini { width: 16px; height: 16px; }
.row-top { display: flex; height: 114px; }
.row-bottom { display: flex; align-items: flex-end; gap: 6px; }
.dial { overflow: visible; font: 8px "Liberation Sans", sans-serif; }
.band { fill: #e6e6e6; stroke: #202020; }
.name { font: italic bold 9px "Liberation Sans", sans-serif; text-anchor: middle; }
.value { font-size: 12px; fill: #20e020; text-anchor: middle; }
.hand { stroke: #303030; stroke-width: 2; }
.ypos { width: 28px; margin-left: 4px; display: flex; flex-direction: column; align-items: center; }
.ypos svg { margin: 4px 0 6px; }
.cap { white-space: nowrap; line-height: 10px; }
.selectors { margin-left: 13px; padding-top: 1px; display: flex; flex-direction: column; }
.sel { display: flex; align-items: center; gap: 9px; margin: 0 0 7px 5px; }
.opts { width: 33px; display: flex; flex-direction: column; gap: 2px; }
.opts span { display: flex; align-items: center; justify-content: space-between; }
.knobs { display: flex; gap: 14px; padding-top: 2px; }
.knob { width: 28px; display: flex; flex-direction: column; align-items: center; gap: 5px; }
```
